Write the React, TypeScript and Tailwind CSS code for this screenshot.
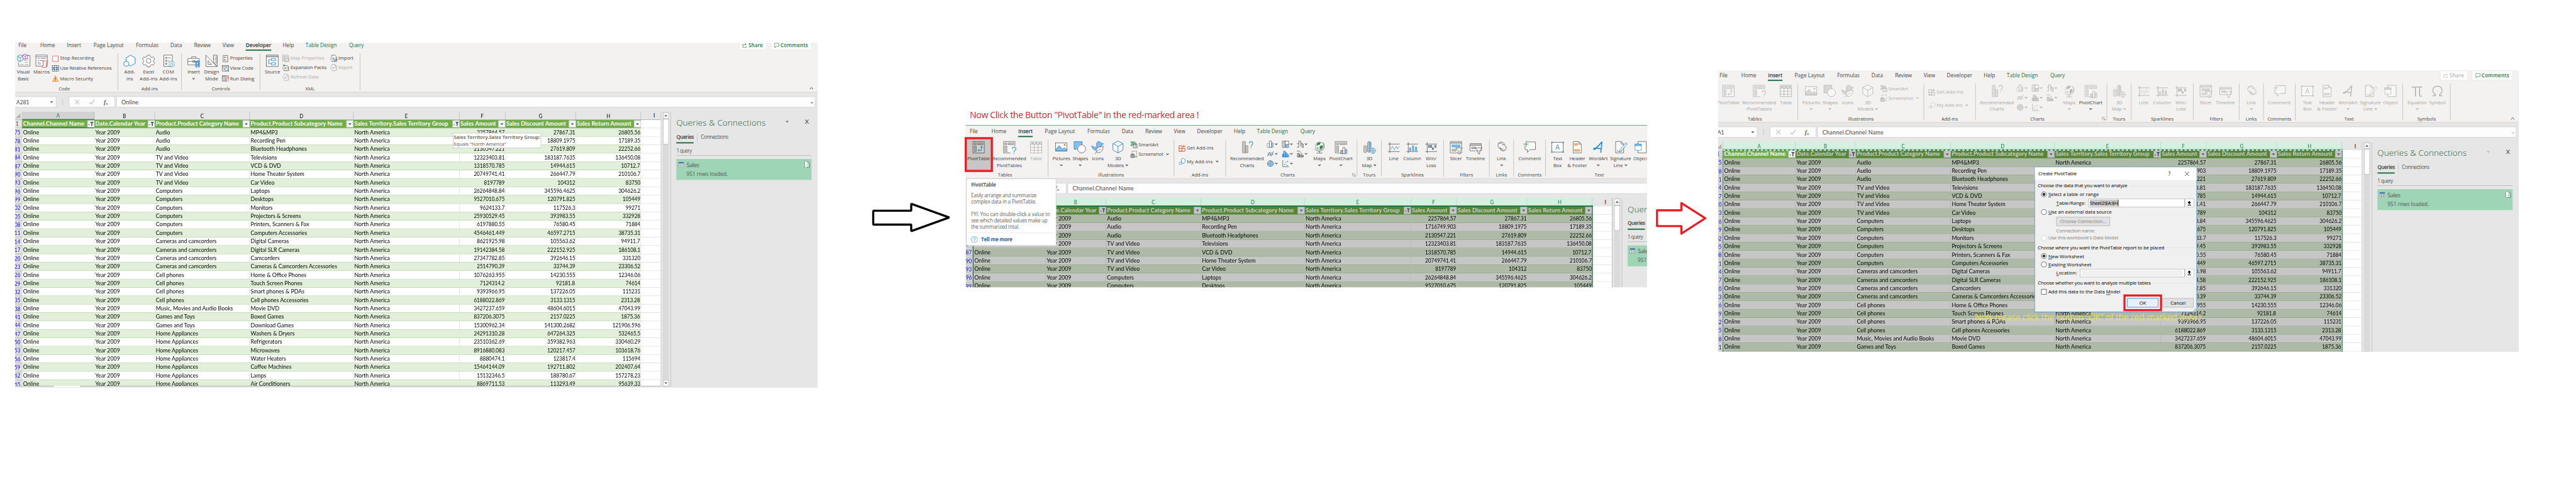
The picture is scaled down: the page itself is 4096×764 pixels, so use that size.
import React, { useLayoutEffect, useRef, useState, type ReactNode } from "react";

/* ---------- text fitted to a given width ---------- */
function Fit({ w, children, className = "" }: { w: number; children: string; className?: string }) {
  const ref = useRef<HTMLSpanElement>(null);
  const [ls, setLs] = useState(0);
  useLayoutEffect(() => {
    if (ref.current) setLs((w - ref.current.offsetWidth) / children.length);
  }, []);
  return (
    <span ref={ref} className={`inline-block shrink-0 self-start whitespace-nowrap ${className}`} style={{ letterSpacing: ls }}>
      {children}
    </span>
  );
}

/* ---------- icons ---------- */
const D = "#3b3a39";
const B = "#1e8bcd";
const LB = "#83beec";
const G = "#c8c6c4";

const big: Record<string, ReactNode> = {
  pivot: (
    <>
      <rect x="2.5" y=".5" width="27" height="27" fill="#fff" stroke={D} />
      <rect x="5.5" y="3.5" width="5" height="5" fill={G} stroke="#797774" />
      <rect x="13.5" y="3.5" width="13" height="5" fill={G} stroke="#797774" />
      <rect x="5.5" y="11.5" width="5" height="13" fill={G} stroke="#797774" />
      <path d="M15 21.5h8V12M20 15l3-3.5 3 3.5M18 18l-3.5 3.5L18 25" stroke={B} strokeWidth="1.4" />
    </>
  ),
  recpivot: (
    <>
      <path d="M19 27.500H2.500V.5h27V11" fill="#fff" stroke={D} />
      <rect x="5.5" y="3.5" width="5" height="5" fill={G} stroke="#797774" />
      <rect x="13.500" y="3.500" width="13" height="5" fill={G} stroke="#797774" />
      <rect x="5.5" y="11.5" width="5" height="13" fill={G} stroke="#797774" />
      <path d="M23 18c0-6 9-6 9-.5 0 4-5 4-5 8.500M27 28v2" stroke={B} strokeWidth="1.500" />
    </>
  ),
  table: (
    <>
      <rect x="2.500" y=".5" width="27" height="27" fill="#fff" stroke={D} />
      <rect x="3" y="1" width="26" height="6" fill={G} />
      <path d="M2.500 7.500h27M2.500 14.500h27M2.500 21.500h27M11.500 7.500v20M20.500 7.500v20" stroke={D} />
      <path d="M5 3h5l-2.500 3zM13.500 3h5L16 6zM22 3h5l-2.500 3z" fill={D} />
    </>
  ),
  pictures: (
    <>
      <rect x="2.500" y="3.500" width="27" height="20" fill="#fff" stroke={D} />
      <path d="M3 19l8-9 8 9 4-4 6 5v3H3z" fill={LB} stroke="#0f6cbd" />
      <circle cx="24" cy="8.500" r="2" fill="#e06c00" />
    </>
  ),
  shapes: (
    <>
      <rect x="1.500" y=".5" width="19" height="18" fill={LB} stroke="#0f6cbd" />
      <circle cx="19.500" cy="18" r="10.500" fill="#f3f2f1" />
      <circle cx="19.500" cy="18" r="9.500" fill="#fff" stroke={D} />
    </>
  ),
  icons: (
    <>
      <path d="M13 6c0-7 10-7 11-1h5c0 3-2 4-5 4 1 4-1 6-3 8l-9 4C4 20 2 16 2 10c3 4 7 5 12 3-1-2-1-4-1-7z" fill={LB} stroke="#0f6cbd" />
      <path d="M29 12c-7 0-17 3-17 10 0 3 2 5 5 5 8 0 11-7 12-15z" fill="#fff" stroke={D} />
      <path d="M9 30c4-6 8-9 14-12" stroke={D} />
    </>
  ),
  cube: (
    <path d="M16-.5l12 6v15l-12 7-12-7v-15zM4 5.500l5 2.500M28 5.500L16 12v5M16 12L9 8M16 17v10" fill="#fff" stroke="#0f7cd0" strokeWidth="1.300" />
  ),
  rechart: (
    <>
      <path d="M4.500.5h7v27h-7zM11.500 10.500h6v17h-6z" fill={G} stroke="#797774" />
      <path d="M21 5c0-6 8-6 8-.5 0 4-4 4-4 8.500M25 15v2" stroke={B} strokeWidth="1.500" />
    </>
  ),
  maps: (
    <>
      <path d="M23 2c7 5 6 20-7 21.500-6 0-10-3-10-6" stroke={D} />
      <circle cx="16" cy="11" r="9.500" fill="#fff" stroke="#797774" />
      <path d="M10 5c3-3 6-3 9-2l-2 5-5 1-3 3zM17 11l6-2 1 5-4 5-4-1zM9 14l4 1v4z" fill="#2a8a4a" />
      <path d="M16 23v5M9 28h14" stroke={D} />
    </>
  ),
  pchart: (
    <>
      <path d="M14 27.500H2.500V.5h27V9" fill="#fff" stroke={D} />
      <rect x="5.500" y="3.500" width="5" height="5" fill={G} stroke="#797774" />
      <rect x="13.500" y="3.500" width="13" height="5" fill={G} stroke="#797774" />
      <rect x="5.500" y="11.500" width="5" height="13" fill={G} stroke="#797774" />
      <path d="M15.500 21.500h5v8h-5zM25.500 19.500h5v10h-5z" fill={G} stroke={D} />
      <path d="M20.500 14.500h5v15h-5z" fill="#fff" stroke={D} />
      <path d="M26 20h4.500v9.500H26z" fill={LB} />
    </>
  ),
  map3d: (
    <>
      <path d="M2.500 11.500l3-2 4 2v14l-4 2-3-2zM11.500 2.500l4-2 4 2v22l-4 2-4-2z" fill={G} stroke="#797774" />
      <path d="M15.500 0l4 2.500v22h-4z" fill={LB} stroke={B} />
      <circle cx="24.500" cy="22.500" r="6.500" fill="#fff" stroke={B} />
      <path d="M18 22.500h13M24.500 16v13M24.500 16c-4 4-4 9 0 13M24.500 16c4 4 4 9 0 13" stroke={B} />
    </>
  ),
  line: (
    <>
      <path d="M2 6.500h28M2 24.500h28M6.500 2v26" stroke={D} />
      <path d="M8 20l5-8 4 8 5-8 3 6 4-6" stroke={B} />
    </>
  ),
  column: (
    <>
      <path d="M2 6.500h28M2 24.500h28M6.500 2v26" stroke={D} />
      <path d="M9.500 15.500h3v7h-3zM16.500 10.500h3v12h-3zM23.500 13.500h3v9h-3z" fill={LB} stroke={B} />
    </>
  ),
  winloss: (
    <>
      <path d="M2 6.500h28M2 24.500h28M6.500 2v26" stroke={D} />
      <path d="M9.500 9.500h3v5h-3zM14.500 9.500h3v5h-3zM18.500 15.500h3v4h-3zM24.500 9.500h3v5h-3z" fill={LB} stroke={D} />
    </>
  ),
  slicer: (
    <>
      <path d="M2.500.5h27v27h-27z" fill="#fff" stroke={D} />
      <path d="M3 1h26v3H3z" fill={G} />
      <path d="M2.500 4.500h27" stroke={D} />
      <path d="M6.500 8.500h19v5h-19z" fill={LB} stroke={B} />
      <path d="M6.500 18.500h10v5h-10z" fill={G} stroke="#797774" />
      <path d="M15.500 15.500h16l-6 7v8l-4-2v-6z" fill="#fff" stroke={D} />
    </>
  ),
  timeline: (
    <>
      <path d="M2.500 5.500h27v17h-27z" fill="#fff" stroke={D} />
      <path d="M3 6h26v3H3z" fill={G} />
      <path d="M2.500 9.500h27M6.500 13.500h4v4h-4zM12.500 13.500h3v4h-3z" stroke={D} />
      <path d="M15.500 15.500h16l-6 7v8l-4-2v-6z" fill="#fff" stroke={D} />
    </>
  ),
  link: (
    <path d="M18 17a8 8 0 1 1 5-8M12 14a7.500 7.500 0 1 0 6-6M13 17c2 4 6 5 10 3M19 8c-2-4-8-5-12-2" stroke="#605e5c" strokeWidth="1.200" />
  ),
  comment: (
    <>
      <path d="M9 1.500h20.500v18H17l-7 7v-7H4.500V10" fill="#fff" stroke={D} />
      <path d="M1 6.500h12M7.500-1v14" stroke="#2a9d4a" strokeWidth="1.400" />
    </>
  ),
  textbox: (
    <>
      <rect x="2.500" y="2.500" width="27" height="23" fill="#fff" stroke={D} />
      <path d="M11.500 20L16 7.500 20.500 20M13 16h6" stroke={B} strokeWidth="1.300" />
      <path d="M1 1h3v3H1zM28 1h3v3h-3zM1 24h3v3H1zM28 24h3v3h-3z" fill={B} />
    </>
  ),
  header: (
    <>
      <path d="M6.500.5h13l6 6v21h-19z" fill="#fff" stroke={D} />
      <path d="M19.500.5v6h6" stroke={D} />
      <path d="M9.500 5.500h7v4h-7zM9.500 19.500h12v4h-12z" fill="#f8c57a" stroke="#e06c00" />
    </>
  ),
  wordart: <path d="M25 1L22 27M25 1C19 8 13 15 8 19c-4 2-4-3 1-3l14 2" stroke={B} strokeWidth="2.400" />,
  signature: (
    <>
      <path d="M4.500.5h13l6 6v21h-19z" fill="#fff" stroke={D} />
      <path d="M17.500.5v6h6M7 22l4 2 9-.5" stroke={D} />
      <path d="M29 3l3 3-14 17-5 2 2-5z" fill="#fff" stroke={B} strokeWidth="1.300" />
    </>
  ),
  object: (
    <>
      <path d="M9.500.5h20v27h-20z" fill="#fff" stroke={D} />
      <path d="M2.500 6.500h15v15h-15z" fill="#fff" stroke={B} />
      <path d="M2.500 6.500h15v4h-15z" fill={LB} stroke={B} />
    </>
  ),
  equation: <path d="M4 4.500h24M11.500 5v22M21.500 5v18c0 3 2 4 5 3M4 7l1-3" stroke={D} strokeWidth="1.800" />,
  symbol: <path d="M4 25.500h7v-3C2 17 3 2.500 16 2.500S30 17 21 22.500v3h7" stroke={D} strokeWidth="1.500" />,
  vb: (
    <>
      <path d="M4.500 18v8.500h27V1.500h-9" fill="#fff" stroke={D} />
      <path d="M16 12.500h12M20 8.500h8M8 22.500h8M19 22.500h9M18 17.500h10" stroke="#797774" />
      <path d="M8-.5L14.500 3v9L8 16l-6-3V3zM2 3l6 4 6.500-4M8 7v9" fill="#fff" stroke={B} strokeWidth="1.300" />
      <path d="M20-2l5.500 2.500v7L20 10l-6-2.500v-7zM14 .5l6 3 5.500-3M20 3.500V10" fill="#fff" stroke="#b146c2" strokeWidth="1.300" />
    </>
  ),
  macros: (
    <>
      <rect x="2.500" y=".5" width="27" height="26" fill="#fff" stroke={D} />
      <path d="M2.500 4.500h27M7 8.500h5M14 8.500h12M7 13.500h3M12 13.500h8M7 17.500h5M7 21.500h8" stroke={D} />
      <path d="M20.500 14.500h10v4h-3v11H18c-2-2 0-4 2-4V14.500z" fill="#fff" stroke="#e8373a" strokeWidth="1.300" />
    </>
  ),
  addins: (
    <>
      <path d="M18 .5l11 6.500v13l-11 6.500-11-6.500V7z" fill="#fff" stroke="#0f7cd0" strokeWidth="1.300" />
      <path d="M8 14.500l6 3.500v6l-6 3.500L2 24v-6z" fill="#fff" stroke="#0f7cd0" strokeWidth="1.300" />
    </>
  ),
  gear: (
    <>
      <path d="M13 .5h6l1.500 4 3 1.500 4-1 3 5-3 3.500v2l3 3.500-3 5-4-1-3 1.500-1.500 4h-6l-1.500-4-3-1.500-4 1-3-5 3-3.500v-2l-3-3.500 3-5 4 1 3-1.500z" fill="#fff" stroke={D} />
      <circle cx="16" cy="14" r="5.500" stroke={D} />
    </>
  ),
  com: (
    <>
      <rect x="5.500" y=".5" width="20" height="27" fill="#fff" stroke={D} />
      <path d="M9.500 5.500h3v3h-3zM9.500 12.500h3v3h-3zM9.500 19.500h3v3h-3zM15 7h7M15 14h4" stroke={D} />
      <path d="M22.500 14.500h3l1 2.500 3-.5 1.500 3-2 2 2 2-1.500 3-3-.5-1 2.500h-3l-1-2.500-3 .5-1.500-3 2-2-2-2 1.500-3 3 .5z" fill="#fff" stroke={B} />
      <circle cx="24" cy="21.500" r="2.500" stroke={B} />
    </>
  ),
  toolbox: (
    <>
      <path d="M2.500 8.500h27v15h-27zM11.500 8v-3.500h10V8M2.500 15.500h27" fill="#fff" stroke={D} />
      <rect x="14.500" y="13.500" width="3" height="4" fill="#fff" stroke={D} />
      <path d="M19 14v3l2 2v10h3V19l2-2v-3h-2v3h-3v-3zM27 14h3v7h-3zM27 22h3v7h-3z" fill={LB} stroke="#0f6cbd" />
    </>
  ),
  design: (
    <>
      <path d="M2.500.5l26 27h-26zM7.500 13.500v9h9z" fill="#fff" stroke={D} />
      <path d="M20.500.5h9v27l-9-9zM25 5h4M23 9.500h6M25 14h4M23 18.500h6" stroke={D} />
    </>
  ),
  source: (
    <>
      <rect x="1.500" y=".5" width="28" height="27" fill="#fff" stroke={D} />
      <path d="M2 1h27v3H2z" fill={G} />
      <path d="M1.500 4.500h28" stroke={D} />
      <path d="M13.500 8.500h10v5h-10zM13.500 18.500h10v5h-10zM13 11H7.500v10H13M7.500 16H5" stroke={B} strokeWidth="1.300" />
    </>
  ),
};

const small: Record<string, ReactNode> = {
  stop: <rect x="1.500" y="1.500" width="13" height="13" fill="#fff" stroke="#e8373a" />,
  rel: (
    <>
      <rect x=".5" y="1.500" width="15" height="13" fill="#fff" stroke={D} />
      <path d="M1 6h4.500v5H1zM10.500 6H15v5h-4.500z" fill={LB} />
      <path d="M.5 6h15M.5 10.500h15M5.500 1.500v13M10.500 1.500v13" stroke="#0f4c81" />
    </>
  ),
  warn: (
    <>
      <path d="M8 1.500L15 15H1z" fill="#fcd28a" stroke="#e07a1a" />
      <path d="M8 6v5M8 12.500V14" stroke={D} strokeWidth="1.500" />
    </>
  ),
  props: <path d="M2.500.5h11v15h-11zM5.500 4h2v2h-2zM5.500 10h2v2h-2zM10 5h2M10 11h2" fill="#fff" stroke={D} />,
  code: (
    <>
      <path d="M.5 1.500h15v13H.5zM.5 4h15M3 7.500h3M3 10.500h3" fill="#fff" stroke={D} />
      <circle cx="10" cy="10" r="3.500" fill="#fff" stroke={B} strokeWidth="1.300" />
      <path d="M12.500 12.500l3 3" stroke={B} strokeWidth="1.300" />
    </>
  ),
  run: (
    <>
      <path d="M12 14.500H.5v-13H12M.5 4H12M3 7h2M6.500 7H11M3 9.500h2M6.500 9.500H11M3 12h2M6.500 12H11" stroke={D} />
      <path d="M14.500 1v10M14.500 13v2" stroke="#e8373a" strokeWidth="1.800" />
    </>
  ),
  xml: (
    <path d="M3.500 5V.5h7l4 4V15.500h-11V13M10.500.5v4h4M2 6L.5 9 2 12M12 6l1.500 3L12 12M5 9a2 2 0 1 0 4 0 2 2 0 1 0-4 0" fill="#fff" stroke={D} />
  ),
  expansion: (
    <>
      <path d="M3.500 5V3.500h7l4 3V15.500h-11V13M2 7L.5 9.500 2 12M12 7l1.500 2.500L12 12M5 9.500a2 2 0 1 0 4 0 2 2 0 1 0-4 0" fill="#fff" stroke={D} />
      <path d="M3.500 0v6M.5 3h6" stroke="#2a9d4a" strokeWidth="1.300" />
    </>
  ),
  map: <path d="M.5.5h13v15H.5zM.5 4h13M5 4v11M.5 8H9M.5 12H6M8.500 7.500h7v8h-7z" fill="#eee" stroke={D} />,
  import: (
    <>
      <path d="M3.500 5V.5h7l4 4V15.500h-11V13M2 6L.5 9 2 12M12 6l1.500 3L12 12M5 9a2 2 0 1 0 4 0 2 2 0 1 0-4 0" fill="#fff" stroke={D} />
      <path d="M16 9v4H9M11 10.500L8.500 13l2.500 2.500" stroke={B} strokeWidth="1.400" />
    </>
  ),
  smartart: (
    <>
      <path d="M0 1h9l5 4-1 2H7L4.500 10H0l3-4.500z" fill="#6bc08b" stroke="#2a9d4a" />
      <path d="M6.500 7.500h9v8h-9zM8.500 10h1M11 10h3M8.500 13h1M11 13h3" fill="#fff" stroke={D} />
    </>
  ),
  screenshot: (
    <>
      <path d="M3.500 6V.5h11V10" stroke={D} strokeDasharray="2 1.500" />
      <path d="M.5 8.500h9v7h-9zM3 8V7h4v1" fill={G} stroke={D} />
      <circle cx="5" cy="12" r="2" fill="#fff" stroke={D} />
      <path d="M13.500 11v5M11 13.500h5" stroke="#2a9d4a" />
    </>
  ),
  getadd: (
    <>
      <path d="M.5 2.500h7v13h-7M.5 2.500v13M.5 9h14v6.500H.5" stroke="#d83b01" strokeWidth="1.200" />
      <path d="M12 1v6M9 4h6" stroke="#d83b01" strokeWidth="1.200" />
    </>
  ),
  myadd: <path d="M10 .5l5 3v6l-5 3-4-2V3zM4 9.500l3 1.500v3l-3 1.500L1 14v-3z" fill="#fff" stroke="#0f7cd0" />,
  bar: (
    <>
      <path d="M.5 6.500h5v9h-5zM10.500 4.500h4v11h-4z" fill="#fff" stroke="#797774" />
      <path d="M5.500.5h5v15h-5z" fill="#fff" stroke={D} />
      <path d="M11 5h3.500v10.500H11z" fill={LB} />
    </>
  ),
  tree: (
    <>
      <path d="M.5.5h15v15H.5z" fill="#fff" stroke={D} />
      <path d="M1 1h6v14H1z" fill={G} />
      <path d="M8 9h7v6H8z" fill={LB} />
      <path d="M7.500 0v16M8 8.500h8" stroke={D} />
    </>
  ),
  water: <path d="M.5 6.500h4V15H.5M4.500 7V.5h5V13M9.500 5.500h3v10h3v-8h-3" stroke={D} />,
  linec: (
    <>
      <path d="M1 14l5-10 4 9 5-11" stroke={D} />
      <path d="M1 5l5 7 4-8 5 7" stroke={B} />
    </>
  ),
  hist: <path d="M.5 8.500h3v7h-3zM3.500 1.500h4v14h-4zM7.500 5.500h4v10h-4zM11.500 9.500h4v6h-4z" fill={LB} stroke="#0f6cbd" />,
  combo: (
    <>
      <path d="M1.500 6.500h4v9h-4zM6.500 9.500h4v6h-4zM11.500 11.500h4v4h-4z" fill={G} stroke={D} />
      <path d="M0 1h6l8 9" stroke={D} />
    </>
  ),
  pie: (
    <>
      <circle cx="8" cy="8" r="7" fill={LB} stroke="#0f6cbd" />
      <path d="M8 8H1a7 7 0 0 1 7-7z" fill={G} stroke="#797774" />
    </>
  ),
  scatter: (
    <>
      <path d="M1.500 0v15.500H16" stroke={D} />
      <path d="M5 9h2v2H5zM8 4h2v2H8zM11 11h2v2h-2zM12 2h2v2h-2z" fill={B} />
    </>
  ),
};

function Icon({ n, off }: { n: string; off?: boolean }) {
  return (
    <svg viewBox="0 0 32 32" fill="none" className={`h-[32px] w-[32px] shrink-0 overflow-visible ${off ? "opacity-45 grayscale" : ""}`}>
      {big[n]}
    </svg>
  );
}
function Mini({ n, off }: { n: string; off?: boolean }) {
  return (
    <svg viewBox="0 0 16 16" fill="none" className={`h-[16px] w-[16px] shrink-0 overflow-visible ${off ? "opacity-45 grayscale" : ""}`}>
      {small[n]}
    </svg>
  );
}
function Chev() {
  return (
    <svg viewBox="0 0 8 6" fill="none" className="inline-block h-[6px] w-[8px] shrink-0">
      <path d="M1.200 1.200L4 4l2.800-2.800" stroke="currentColor" strokeWidth="1.500" />
    </svg>
  );
}
function Tri({ className = "" }: { className?: string }) {
  return (
    <svg viewBox="0 0 8 5" className={`h-[5px] w-[8px] shrink-0 ${className}`}>
      <path d="M0 0h8L4 5z" fill="currentColor" />
    </svg>
  );
}

/* ---------- ribbon parts ---------- */
function Big({ n, a, b, aw, bw, drop, off, on, className }: { n: string; a: string; b?: string; aw: number; bw?: number; drop?: boolean; off?: boolean; on?: boolean; className: string }) {
  return (
    <div className={`flex shrink-0 flex-col items-center whitespace-nowrap ${off && !on ? "text-[#a9a7a5]" : "text-[#444]"} ${className}`}>
      <div className="h-[33px]"><Icon n={n} off={off} /></div>
      <div className="flex"><Fit w={aw}>{a}</Fit></div>
      {(b || drop) && (
        <div className="flex h-[16px] items-center gap-[3px]">
          {b && <Fit w={bw ?? 40}>{b}</Fit>}
          {drop && <Chev />}
        </div>
      )}
    </div>
  );
}
function Small({ n, t, w, drop, off, className = "" }: { n: string; t: string; w: number; drop?: boolean; off?: boolean; className?: string }) {
  return (
    <div className={`flex items-center gap-[3px] whitespace-nowrap ${off ? "text-[#b1afad]" : "text-[#444]"} ${className}`}>
      <Mini n={n} off={off} />
      <Fit w={w}>{t}</Fit>
      {drop && <span className="ml-[3px] flex"><Chev /></span>}
    </div>
  );
}
function Group({ cap, className, children, shift = "", launcher }: { cap: string; className: string; children: ReactNode; shift?: string; launcher?: boolean }) {
  return (
    <div className={`relative flex h-[88px] shrink-0 flex-col border-r border-[#b3b0ad] ${className}`}>
      <div className="flex h-[76px] shrink-0 pt-[4px] leading-[16px]">{children}</div>
      <div className={`text-center text-[11.200px] leading-[16px] text-[#444] ${shift}`}>{cap}</div>
      {launcher && (
        <svg viewBox="0 0 8 8" fill="none" className="absolute right-[3px] bottom-0 h-[8px] w-[8px]">
          <path d="M.5 7V.5H7M3 3l4 4M7.500 3v4.500H3" stroke="#666" />
        </svg>
      )}
    </div>
  );
}
function ChartCell({ n, off }: { n: string; off?: boolean }) {
  return (
    <div className={`flex h-[23px] w-[35.500px] items-center gap-[2px] pl-[2px] ${off ? "text-[#a9a7a5]" : "text-[#444]"}`}>
      <Mini n={n} off={off} />
      <Chev />
    </div>
  );
}

function InsertRibbon({ off }: { off?: boolean }) {
  return (
    <>
      <Group cap="Tables" className="w-[197px]" shift="pr-[8px]">
        <Big n="pivot" a="PivotTable" aw={54} off={off} className="w-[62px]" />
        <Big n="recpivot" a="Recommended" aw={80} b="PivotTables" bw={60} off={off} className="w-[84px]" />
        <Big n="table" a="Table" aw={28} off className="w-[44px]" />
      </Group>
      <Group cap="Illustrations" className="w-[300px]">
        <Big n="pictures" a="Pictures" aw={42} drop off={off} className="ml-[8px] w-[46px]" />
        <Big n="shapes" a="Shapes" aw={37} drop off={off} className="w-[44px]" />
        <Big n="icons" a="Icons" aw={28} off={off} className="w-[40px]" />
        <Big n="cube" a="3D" aw={14} b="Models" bw={39} drop off={off} className="w-[56px]" />
        <div className="flex flex-col pl-[2px]">
          <Small n="smartart" t="SmartArt" w={47} off={off} className="h-[16px]" />
          <Small n="screenshot" t="Screenshot" w={59} drop off={off} className="mt-[7px] h-[16px]" />
        </div>
      </Group>
      <Group cap="Add-ins" className="w-[123px]">
        <div className="flex flex-col pl-[11px]">
          <Small n="getadd" t="Get Add-ins" w={63} off={off} className="mt-[8px] h-[16px]" />
          <Small n="myadd" t="My Add-ins" w={62} drop off={off} className="mt-[16px] h-[16px]" />
        </div>
      </Group>
      <Group cap="Charts" className="w-[313px]" shift="pr-[18px]" launcher>
        <Big n="rechart" a="Recommended" aw={80} b="Charts" bw={34} off={off} className="ml-[8px] w-[85px]" />
        <div className="ml-[3px] flex w-[106px] shrink-0 flex-wrap content-start">
          <div className="-mt-[5px] flex flex-col">
            <div className="flex">
              <ChartCell n="bar" off={off} />
              <ChartCell n="tree" off={off} />
              <ChartCell n="water" off={off} />
            </div>
            <div className="flex">
              <ChartCell n="linec" off={off} />
              <ChartCell n="hist" off={off} />
              <ChartCell n="combo" off={off} />
            </div>
            <div className="flex">
              <ChartCell n="pie" off={off} />
              <ChartCell n="scatter" off={off} />
            </div>
          </div>
        </div>
        <Big n="maps" a="Maps" aw={29} drop off={off} className="w-[42px]" />
        <Big n="pchart" a="PivotChart" aw={56} drop off={off} on className="w-[60px]" />
      </Group>
      <Group cap="Tours" className="w-[58px]">
        <Big n="map3d" a="3D" aw={14} b="Map" bw={24} drop off={off} className="w-[57px]" />
      </Group>
      <Group cap="Sparklines" className="w-[148px]">
        <Big n="line" a="Line" aw={23} off={off} className="ml-[8px] w-[42px]" />
        <Big n="column" a="Column" aw={43} off={off} className="w-[46px]" />
        <Big n="winloss" a="Win/" aw={26} b="Loss" bw={23} off={off} className="w-[44px]" />
      </Group>
      <Group cap="Filters" className="w-[109px]">
        <Big n="slicer" a="Slicer" aw={29} off={off} className="ml-[7px] w-[44px]" />
        <Big n="timeline" a="Timeline" aw={46} off={off} className="w-[49px]" />
      </Group>
      <Group cap="Links" className="w-[58px]">
        <Big n="link" a="Link" aw={22} drop off={off} className="w-[57px]" />
      </Group>
      <Group cap="Comments" className="w-[76px]">
        <Big n="comment" a="Comment" aw={54} off={off} className="w-[75px]" />
      </Group>
      <Group cap="Text" className="w-[256px]">
        <Big n="textbox" a="Text" aw={21} b="Box" bw={19} off={off} className="ml-[4px] w-[48px]" />
        <Big n="header" a="Header" aw={38} b="& Footer" bw={47} off={off} className="w-[46px]" />
        <Big n="wordart" a="WordArt" aw={45} drop off={off} className="w-[54px]" />
        <Big n="signature" a="Signature" aw={50} b="Line" bw={22} drop off={off} className="w-[52px]" />
        <Big n="object" a="Object" aw={35} off={off} className="w-[44px]" />
      </Group>
      <Group cap="Symbols" className="w-[113px]">
        <Big n="equation" a="Equation" aw={46} drop off={off} className="ml-[9px] w-[49px]" />
        <Big n="symbol" a="Symbol" aw={40} off={off} className="w-[47px]" />
      </Group>
    </>
  );
}

function DeveloperRibbon() {
  return (
    <>
      <Group cap="Code" className="w-[247px]" shift="pr-[8px]">
        <Big n="vb" a="Visual" aw={31} b="Basic" bw={27} className="w-[43px]" />
        <Big n="macros" a="Macros" aw={39} className="w-[44px]" />
        <div className="flex flex-col pl-[3px]">
          <Small n="stop" t="Stop Recording" w={81} className="h-[17px]" />
          <Small n="rel" t="Use Relative References" w={123} className="mt-[7px] h-[16px]" />
          <Small n="warn" t="Macro Security" w={79} className="mt-[8px] h-[16px]" />
        </div>
      </Group>
      <Group cap="Add-ins" className="w-[152px]">
        <Big n="addins" a="Add-" aw={26} b="ins" bw={15} className="ml-[6px] w-[44px]" />
        <Big n="gear" a="Excel" aw={26} b="Add-ins" bw={42} className="w-[46px]" />
        <Big n="com" a="COM" aw={28} b="Add-ins" bw={42} className="w-[48px]" />
      </Group>
      <Group cap="Controls" className="w-[187px]">
        <Big n="toolbox" a="Insert" aw={29} drop className="ml-[7px] w-[42px]" />
        <Big n="design" a="Design" aw={35} b="Mode" bw={31} className="w-[44px]" />
        <div className="flex flex-col pl-[3px]">
          <Small n="props" t="Properties" w={54} className="h-[17px]" />
          <Small n="code" t="View Code" w={56} className="mt-[7px] h-[16px]" />
          <Small n="run" t="Run Dialog" w={58} className="mt-[8px] h-[16px]" />
        </div>
      </Group>
      <Group cap="XML" className="w-[238px]">
        <Big n="source" a="Source" aw={37} className="ml-[6px] w-[46px]" />
        <div className="flex w-[115px] flex-col pl-[1px]">
          <Small n="map" t="Map Properties" w={80} off className="h-[15px]" />
          <Small n="expansion" t="Expansion Packs" w={86} className="mt-[7px] h-[16px]" />
          <Small n="xml" t="Refresh Data" w={66} off className="mt-[7px] h-[16px]" />
        </div>
        <div className="flex flex-col">
          <Small n="import" t="Import" w={36} className="h-[15px]" />
          <Small n="xml" t="Export" w={33} off className="mt-[7px] h-[16px]" />
        </div>
      </Group>
    </>
  );
}

/* ---------- worksheet ---------- */
const rows: [string, string, string, string, string][] = [
  ["Audio", "MP4&MP3", "2257864.57", "27867.31", "26805.56"],
  ["Audio", "Recording Pen", "1716749.903", "18809.1975", "17189.35"],
  ["Audio", "Bluetooth Headphones", "2130547.221", "27619.809", "22252.66"],
  ["TV and Video", "Televisions", "12323403.81", "183187.7635", "136450.08"],
  ["TV and Video", "VCD & DVD", "1318570.785", "14944.615", "10712.7"],
  ["TV and Video", "Home Theater System", "20749741.41", "266447.79", "210106.7"],
  ["TV and Video", "Car Video", "8197789", "104312", "83750"],
  ["Computers", "Laptops", "26264848.84", "345596.4625", "304626.2"],
  ["Computers", "Desktops", "9527010.675", "120791.825", "105449"],
  ["Computers", "Monitors", "9624133.7", "117526.3", "99271"],
  ["Computers", "Projectors & Screens", "25930529.45", "393983.55", "332928"],
  ["Computers", "Printers, Scanners & Fax", "6197880.55", "76580.45", "71884"],
  ["Computers", "Computers Accessories", "4546461.449", "46597.2715", "38735.31"],
  ["Cameras and camcorders", "Digital Cameras", "8621925.98", "105563.62", "94911.7"],
  ["Cameras and camcorders", "Digital SLR Cameras", "19142384.58", "222152.925", "186108.1"],
  ["Cameras and camcorders", "Camcorders", "27347782.85", "392646.15", "331320"],
  ["Cameras and camcorders", "Cameras & Camcorders Accessories", "2514790.39", "33744.39", "23306.52"],
  ["Cell phones", "Home & Office Phones", "1076263.955", "14230.555", "12346.06"],
  ["Cell phones", "Touch Screen Phones", "7124314.2", "92181.8", "74614"],
  ["Cell phones", "Smart phones & PDAs", "9393966.95", "137226.05", "115231"],
  ["Cell phones", "Cell phones Accessories", "6188022.869", "3133.1315", "2313.28"],
  ["Music, Movies and Audio Books", "Movie DVD", "3427237.659", "48604.6015", "47043.99"],
  ["Games and Toys", "Boxed Games", "837206.3075", "2157.0225", "1875.36"],
  ["Games and Toys", "Download Games", "15300962.34", "141300.2682", "121906.596"],
  ["Home Appliances", "Washers & Dryers", "24291310.28", "647264.325", "532465.5"],
  ["Home Appliances", "Refrigerators", "23510362.69", "359382.963", "330460.29"],
  ["Home Appliances", "Microwaves", "8916880.083", "120217.457", "103618.76"],
  ["Home Appliances", "Water Heaters", "8880474.1", "123817.4", "115694"],
  ["Home Appliances", "Coffee Machines", "15464144.09", "192711.802", "202407.64"],
  ["Home Appliances", "Lamps", "15132346.5", "188780.67", "157278.23"],
  ["Home Appliances", "Air Conditioners", "8869711.53", "113293.49", "95639.33"],
];
const colW = ["w-[172px]", "w-[144px]", "w-[226px]", "w-[247px]", "w-[253px]", "w-[109px]", "w-[168px]", "w-[155px]"];
const heads: [string, boolean, number][] = [
  ["Channel.Channel Name", true, 146],
  ["Date.Calendar Year", true, 119],
  ["Product.Product Category Name", false, 198],
  ["Product.Product Subcategory Name", false, 219],
  ["Sales Territory.Sales Territory Group", true, 224],
  ["Sales Amount", false, 85],
  ["Sales Discount Amount", false, 142],
  ["Sales Return Amount", false, 130],
];

function FilterBtn({ active, dim }: { active: boolean; dim: boolean }) {
  return (
    <span className={`flex h-[17px] w-[17px] shrink-0 items-center justify-center border ${dim ? "border-[#a8a8b0] bg-[#c3c5c8]" : "border-[#b5b8bd] bg-[#f5f6f8]"}`}>
      <svg viewBox="0 0 15 15" className="h-[15px] w-[15px]">
        {active ? <path d="M5.500 2.500h8.500L11 6.500v6H8.500v-6zM1.500 8.500h4L3.500 11z" fill="#555" /> : <path d="M4 6h7l-3.500 4.500z" fill="#555" />}
      </svg>
    </span>
  );
}

function Sheet({ mode, count }: { mode: "plain" | "sel" | "ants"; count: number }) {
  const sel = mode !== "plain";
  return (
    <div className="relative flex w-[1541px] shrink-0 flex-col overflow-hidden border-r border-[#999] font-['Lato',sans-serif] text-[13.600px] leading-[19px] text-black">
      <div className={`flex h-[20px] shrink-0 bg-[#e6e6e6] text-[13px] ${sel ? "" : "border-b border-[#999]"}`}>
        <div className="flex w-[19px] items-end justify-end border-r border-[#b5b5b5] pr-[3px] pb-[3px]">
          <svg viewBox="0 0 12 12" className="h-[12px] w-[12px]"><path d="M12 0v12H0z" fill="#b4b4b4" /></svg>
        </div>
        {colW.map((w, i) => (
          <div
            key={i}
            className={`flex h-[20px] shrink-0 items-center justify-center border-r ${w} ${
              sel ? "border-[#b0c8bb] bg-[#d3f0e0] text-[#217346]" : i === 0 ? "border-b-2 border-[#ababab] border-b-[#217346] bg-[#d2d2d2] text-[#217346]" : "border-[#b5b5b5]"
            }`}
          >
            <span className="inline-block scale-x-[0.9]">{"ABCDEFGH"[i]}</span>
          </div>
        ))}
        <div className="flex grow items-center justify-end pr-[14px]"><span>I</span></div>
      </div>
      {/* header row */}
      <div className="flex h-[20px] shrink-0">
        <div className={`flex h-[20px] w-[19px] flex-col border-r border-[#999] pb-[1px] ${sel ? "bg-[#d5d5d5]" : "bg-[#e6e6e6]"}`}>
          <div className={`flex h-[18px] items-center border-b border-[#b0b0b0] pl-[3px] ${sel ? "text-[#1f6fbf]" : "text-[#7d3b00]"}`}><span className="scale-x-[0.89]">1</span></div>
        </div>
        {heads.map(([h, act, w], i) => {
          const bright = !sel || (mode === "ants" && i === 0);
          return (
            <div key={h} className={`flex shrink-0 items-center justify-between pl-[2px] font-bold whitespace-nowrap ${colW[i]} ${bright ? "bg-[#70ad47] text-white" : "bg-[#568535] text-[#cfcfcf]"} ${sel ? "border-b border-[#82a16d]" : i === 0 ? "border-b-2 border-[#217346]" : "border-b border-[#a9d08e]"}`}>
              <Fit w={w}>{h}</Fit>
              <FilterBtn active={act} dim={!bright} />
            </div>
          );
        })}
        <div className="grow border-b border-[#d4d4d4] bg-white" />
      </div>
      {rows.slice(0, count).map((r, ri) => {
        const green = ri % 2 === 0;
        const cell = sel
          ? green
            ? "bg-[#aebaa8] border-r-[#aebaa8] border-b-[#82a16d]"
            : "bg-[#c6c6c6] border-r-[#a8a8a8] border-b-[#82a16d]"
          : green
            ? "bg-[#e2efda] border-r-[#e2efda] border-b-[#a9d08e]"
            : "bg-white border-r-[#d4d4d4] border-b-[#a9d08e]";
        const vals = ["Online", "Year 2009", r[0], r[1], "North America", r[2], r[3], r[4]];
        return (
          <div key={ri} className="flex h-[20px] shrink-0">
            <div className="flex h-[20px] w-[19px] shrink-0 flex-col justify-center border-r border-[#999] bg-[#f0f0f0] py-[1px]">
              <div className={`flex h-[18px] items-center justify-end overflow-hidden border-y border-[#ababab] pr-[3px] text-[#0000ff] ${sel ? "bg-[#d5d5d5]" : "bg-[#e6e6e6]"}`}>
                <span className="inline-block origin-right scale-x-[0.89]">{475 + ri * 3}</span>
              </div>
            </div>
            {vals.map((v, i) => (
              <div key={i} className={`flex shrink-0 items-center border-r border-b whitespace-nowrap ${colW[i]} ${cell} ${i > 4 ? "justify-end pr-[1px]" : "pl-[2px]"} ${i === 7 ? "border-r-[#a9d08e]" : ""}`}>
                <span className={`inline-block ${i > 4 ? "origin-right scale-x-[0.895]" : "origin-left scale-x-[0.97]"}`}>{v}</span>
              </div>
            ))}
            <div className="grow border-b border-[#d4d4d4] bg-white" />
          </div>
        );
      })}
      {sel && (
        <div className="pointer-events-none absolute top-[18px] bottom-0 left-[17px] w-[1477px] border-x-2 border-t-[3px] border-[#217346]">
          {mode === "ants" && (
            <div className="absolute -inset-x-px -top-[2px] bottom-0 border-x border-t-2 border-dashed border-white" />
          )}
        </div>
      )}
    </div>
  );
}

/* ---------- workbook window ---------- */
const tabList: [string, string, number][] = [
  ["File", "w-[51.700px]", 19],
  ["Home", "w-[63.700px]", 35],
  ["Insert", "w-[63.300px]", 34],
  ["Page Layout", "w-[101.300px]", 72],
  ["Formulas", "w-[82px]", 53],
  ["Data", "w-[56px]", 27],
  ["Review", "w-[68px]", 40],
  ["View", "w-[55.300px]", 27],
  ["Developer", "w-[88px]", 61],
  ["Help", "w-[54.500px]", 27],
  ["Table Design", "w-[103.700px]", 75],
  ["Query", "w-[60px]", 35],
];

function Workbook({ active, mode, cell, formula, count, children }: { active: string; mode: "plain" | "sel" | "ants"; cell: string; formula: string; count: number; children?: ReactNode }) {
  const off = mode === "ants";
  return (
    <div className="relative flex h-[831px] w-[1913px] shrink-0 flex-col bg-[#e6e6e6] font-['Open_Sans',sans-serif] text-[11.500px]">
      <div className={`h-[128px] shrink-0 border-b border-[#cfcdcb] bg-[#f3f2f1] ${mode === "sel" ? "border-t border-t-[#217346] pt-[5px]" : "pt-[6px]"}`}>
        <div className="flex h-[23px] items-stretch pl-[10px] text-[12.500px] text-[#444]">
          {tabList.map(([t, w, tw]) => (
            <div key={t} className={`flex shrink-0 ${w} ${t === active ? "font-semibold text-[#333]" : t === "Table Design" || t === "Query" ? "text-[#217346]" : ""}`}>
              <div className={`flex h-[23px] items-center leading-[20px] ${t === active ? "border-b-[3px] border-[#217346]" : ""}`}><Fit w={tw}>{t}</Fit></div>
            </div>
          ))}
          <div className="flex grow items-start justify-end gap-[10px] pr-[13px] text-[12px] leading-[22px] font-semibold">
            <div className={`-mt-[2px] flex h-[24px] w-[66px] items-center gap-[3px] rounded-[2px] border border-[#e1dfdd] bg-white pl-[7px] ${off ? "text-[#b5b3b1]" : "text-[#217346]"}`}>
              <svg viewBox="0 0 12 12" fill="none" className="h-[12px] w-[12px]"><path d="M4 4H1v7.500h8.500V8M3.500 8c0-3 2-4.500 5-4.500M6.500 1L9.500 3.500 6.500 6" stroke="currentColor" /></svg>
              <Fit w={34}>Share</Fit>
            </div>
            <div className="-mt-[2px] flex h-[24px] w-[98px] items-center gap-[3px] rounded-[2px] border border-[#e1dfdd] bg-white pl-[7px] text-[#217346]">
              <svg viewBox="0 0 12 12" fill="none" className="h-[12px] w-[12px]"><path d="M.5 1.500h11v7H5l-3 3v-3H.5z" stroke="currentColor" /></svg>
              <Fit w={66}>Comments</Fit>
            </div>
          </div>
        </div>
        <div className="mt-[6px] flex">
          {active === "Developer" ? <DeveloperRibbon /> : <InsertRibbon off={off} />}
          <div className="flex h-[88px] grow items-end justify-end pr-[9px] pb-[1px]">
            <svg viewBox="0 0 10 7" fill="none" className="h-[7px] w-[10px]"><path d="M1 6l4-4.500L9 6" stroke="#444" strokeWidth="1.400" /></svg>
          </div>
        </div>
      </div>
      {/* formula bar */}
      <div className="mt-[10px] flex h-[26px] shrink-0 items-stretch pr-[5px] font-['Lato',sans-serif] text-[13.600px] leading-[24px] text-[#444]">
        <div className="flex w-[100px] items-center justify-between border border-l-0 border-[#c6c6c6] bg-[#fdfdfd] pr-[6px] pl-[5px]">
          <span className="inline-block origin-left scale-x-[0.93]">{cell}</span>
          <Tri className="text-[#777]" />
        </div>
        <div className="flex w-[30px] flex-col items-center justify-center gap-[3px]">
          <i className="h-[2px] w-[2px] bg-[#aaa]" /><i className="h-[2px] w-[2px] bg-[#aaa]" /><i className="h-[2px] w-[2px] bg-[#aaa]" />
        </div>
        <div className="flex w-[110px] items-center gap-[21px] border border-[#c6c6c6] bg-[#fdfdfd] pl-[12px]">
          <svg viewBox="0 0 14 14" fill="none" className="h-[14px] w-[14px]"><path d="M2 2l10 10M12 2L2 12" stroke="#c0c0c0" strokeWidth="1.700" /></svg>
          <svg viewBox="0 0 14 14" fill="none" className="h-[14px] w-[14px]"><path d="M1 8l4 4 8-10" stroke="#c0c0c0" strokeWidth="2" /></svg>
          <span className="font-['Liberation_Serif',serif] text-[15px] leading-none font-bold text-[#666] italic">f<sub className="text-[10px]">x</sub></span>
        </div>
        <div className="ml-[3px] flex grow items-center justify-between border border-[#c6c6c6] bg-[#fdfdfd] pr-[3px] pl-[11px]">
          <Fit w={formula === "Online" ? 41 : 146}>{formula}</Fit>
          <span className={off ? "text-[#bbb]" : "text-[#777]"}><Chev /></span>
        </div>
      </div>
      <div className="mt-[10px] flex min-h-0 grow">
        <div className="flex w-[1541px] shrink-0 flex-col">
          <div className="flex min-h-0 grow overflow-hidden"><Sheet mode={mode} count={count} /></div>
          <div className="flex h-[3px] shrink-0">
            <div className="w-[94px] border-t border-r border-[#999] bg-[#e6e6e6]" />
            <div className="w-[64px] bg-white" />
            <div className="grow border-t border-l border-[#999] bg-[#e6e6e6]" />
          </div>
        </div>
        {/* scrollbar */}
        <div className="ml-[4px] flex w-[14px] shrink-0 flex-col bg-[#dadada] pt-[2px] pb-[2px]">
          <div className="flex h-[15px] items-center justify-center border border-[#ababab] bg-white"><Tri className="rotate-180 text-[#666]" /></div>
          <div className="mt-px h-[60px] border border-[#ababab] bg-white" />
          <div className="grow" />
          <div className="flex h-[15px] items-center justify-center border border-[#ababab] bg-white"><Tri className="text-[#666]" /></div>
        </div>
        {/* side pane */}
        <div className="mt-[2px] ml-[4px] flex grow flex-col border-l border-[#b5b5b5] pr-[14px] pl-[13px] text-[12.500px] text-[#555]">
          <div className="flex h-[50px] items-center">
            <div className="flex items-center"><Fit w={213} className="text-[20px] font-light text-[#185c37]">Queries &amp; Connections</Fit></div>
            <div className={`ml-auto flex pr-[38px] pb-[6px] ${off ? "text-[#bbb]" : "text-[#777]"}`}><Tri /></div>
            <svg viewBox="0 0 10 10" fill="none" className="mr-[6px] mb-[6px] h-[10px] w-[10px]"><path d="M1 0l8 10M9 0L1 10" stroke="#555" strokeWidth="1.600" /></svg>
          </div>
          <div className="flex h-[24px] items-start">
            <div className="flex h-[24px] items-center border-b-[3px] border-[#217346] font-semibold text-[#444]"><Fit w={41}>Queries</Fit></div>
            <div className="mx-[8px] h-[18px] w-px bg-[#bbb]" />
            <div className="flex h-[20px] items-center"><Fit w={66}>Connections</Fit></div>
          </div>
          <div className="mt-[4px] flex h-[25px] items-end border-b border-[#ababab] pb-[1px] text-[12px] leading-[18px]"><Fit w={36} className="mt-auto">1 query</Fit></div>
          <div className="mt-[8px] flex h-[50px] items-start bg-[#9fd5b7] pt-[5px] pr-[3px] pl-[5px]">
            <svg viewBox="0 0 13 13" className="mt-[2px] h-[13px] w-[13px]">
              <rect width="13" height="13" fill="#777" />
              <rect width="13" height="3.500" fill="#3b7ac2" />
              <path d="M1 4h3v2H1zM5 4h3v2H5zM9 4h3v2H9zM1 7h3v2H1zM5 7h3v2H5zM9 7h3v2H9zM1 10h3v2H1zM5 10h3v2H5zM9 10h3v2H9z" fill="#fff" />
            </svg>
            <div className="ml-[6px] flex flex-col">
              <Fit w={31} className="text-[14px] leading-[18px]">Sales</Fit>
              <Fit w={98} className="mt-[4px] leading-[18px]">951 rows loaded.</Fit>
            </div>
            <svg viewBox="0 0 15 16" fill="none" className="ml-auto h-[16px] w-[15px]">
              <path d="M1.500.5h7l4 4v11h-11z" fill="#fff" stroke="#666" />
              <path d="M8.500.5v4h4" stroke="#666" />
              <path d="M7 11a3.500 3.500 0 0 1 6-1.500V8M14 12a3.500 3.500 0 0 1-6 1.500V15" stroke="#3a9d68" strokeWidth="1.400" />
            </svg>
          </div>
        </div>
      </div>
      {children}
    </div>
  );
}

/* ---------- dialog ---------- */
function Radio({ on, off }: { on?: boolean; off?: boolean }) {
  return (
    <span className={`mr-[4px] ml-[15px] flex h-[13px] w-[13px] shrink-0 items-center justify-center rounded-full border bg-white ${off ? "border-[#c4c4c4]" : "border-[#333]"}`}>
      {on && <i className="h-[7px] w-[7px] rounded-full bg-[#333]" />}
    </span>
  );
}
function Section({ t, w }: { t: string; w: number }) {
  return (
    <div className="flex h-[20px] items-center pr-[6px] pl-[7px] leading-[20px]">
      <Fit w={w}>{t}</Fit>
      <div className="ml-[5px] h-px grow bg-[#dcdcdc]" />
    </div>
  );
}
function PickBtn() {
  return (
    <span className="flex h-full w-[22px] items-center justify-center border-l-2 border-[#ababab] bg-[#fdfdfd]">
      <svg viewBox="0 0 10 11" className="h-[11px] w-[10px]"><path d="M5 0l4.500 4.500h-3V8h-3V4.500h-3zM1 9.500h8V11H1z" fill="#000" /></svg>
    </span>
  );
}
function U({ k, t }: { k: string; t: string }) {
  return <span className="whitespace-nowrap"><span className="underline underline-offset-2">{k}</span>{t}</span>;
}
function Dialog() {
  return (
    <div className="absolute top-[234px] left-[760px] flex h-[346px] w-[387px] flex-col border border-[#1883d7] bg-[#f0f0f0] text-[11.600px] leading-[16px] text-black">
      <div className="flex h-[30px] shrink-0 items-center bg-white pr-[17px] pl-[8px] leading-[30px]">
        <Fit w={92}>Create PivotTable</Fit>
        <span className="mr-[34px] ml-auto text-[13px]">?</span>
        <svg viewBox="0 0 12 12" fill="none" className="h-[11px] w-[11px]"><path d="M.5.5l11 11M11.500.5l-11 11" stroke="#000" strokeWidth="1.100" /></svg>
      </div>
      <div className="h-[4px]" />
      <Section t="Choose the data that you want to analyze" w={214} />
      <div className="flex h-[20px] items-center"><Radio on /><U k="S" t="elect a table or range" /></div>
      <div className="flex h-[22px] items-center pr-[6px] pl-[51px]">
        <div className="w-[76px]"><U k="T" t="able/Range:" /></div>
        <div className="flex h-[20px] grow items-center border border-[#ababab] bg-white pl-[3px]">
          <span className="flex border-r border-black bg-[#c8c8c8]"><Fit w={67}>Sheet2!$A:$H</Fit></span>
          <span className="ml-auto h-full"><PickBtn /></span>
        </div>
      </div>
      <div className="flex h-[20px] items-center"><Radio /><U k="U" t="se an external data source" /></div>
      <div className="mt-[2px] ml-[51px] flex h-[22px] w-[128px] items-center justify-center border border-[#b0b0b0] bg-[#e1e1e1] leading-[20px] text-[#838383]"><Fit w={110}>Choose Connection...</Fit></div>
      <div className="mt-[2px] flex h-[18px] items-center pl-[51px] leading-[18px] text-[#838383]"><Fit w={93}>Connection name:</Fit></div>
      <div className="flex h-[16px] items-center text-[#838383]"><Radio off /><Fit w={167}>Use this workbook's Data Model</Fit></div>
      <div className="h-[5px]" />
      <Section t="Choose where you want the PivotTable report to be placed" w={301} />
      <div className="flex h-[21px] items-center"><Radio on /><U k="N" t="ew Worksheet" /></div>
      <div className="flex h-[19px] items-center"><Radio /><U k="E" t="xisting Worksheet" /></div>
      <div className="flex h-[21px] items-center pr-[6px] pl-[51px]">
        <div className="w-[56px]"><U k="L" t="ocation:" /></div>
        <div className="flex h-[20px] grow items-center border border-[#ababab] bg-white pl-[3px]">
          <span className="mr-[5px] h-[14px] grow bg-[#f0f0f0]" />
          <PickBtn />
        </div>
      </div>
      <div className="h-[4px]" />
      <Section t="Choose whether you want to analyze multiple tables" w={269} />
      <div className="flex h-[21px] items-center">
        <span className="mr-[4px] ml-[15px] h-[13px] w-[13px] border border-[#333] bg-white" />
        <span className="whitespace-nowrap">Add this data to the Data <span className="underline underline-offset-2">M</span>odel</span>
      </div>
      <div className="mt-[5px] flex h-[22px] justify-end gap-[10px] pr-[7px]">
        <div className="flex w-[74px] items-center justify-center border border-[#0078d7] bg-[#e5f1fb] outline-[5px] outline-offset-[4px] outline-[#ed1c24] outline-solid"><span>OK</span></div>
        <div className="flex w-[74px] items-center justify-center border border-[#adadad] bg-[#e1e1e1]"><span>Cancel</span></div>
      </div>
      <svg viewBox="0 0 9 9" className="absolute right-0 bottom-0 h-[9px] w-[9px]"><path d="M0 9l9-9M3 9l6-6M6 9l3-3" stroke="#999" strokeWidth="1.200" /></svg>
    </div>
  );
}

export default function App() {
  return (
    <div className="h-[764px] w-[4096px] overflow-hidden bg-white">
      <div className="flex h-[1144px] w-[6136px] origin-top-left scale-[0.66754] items-start font-['Open_Sans',sans-serif]">
        <div className="mt-[102px] ml-[36px] h-[821px] w-[1911px] shrink-0 overflow-hidden">
          <div className="-mt-[10px] -ml-[2px]">
            <Workbook active="Developer" mode="plain" cell="A281" formula="Online" count={31}>
              <div className="absolute top-[225px] left-[1045px] flex h-[36px] w-[210px] flex-col border border-[#b8b8b8] bg-white pl-[1px] text-[11.500px] leading-[17px] text-[#555]">
                <Fit w={206} className="font-semibold">Sales Territory.Sales Territory Group:</Fit>
                <Fit w={125}>Equals "North America"</Fit>
              </div>
            </Workbook>
          </div>
        </div>

        <svg viewBox="0 0 190 80" fill="none" className="mt-[479px] ml-[128px] h-[80px] w-[190px] shrink-0">
          <path d="M5 23.500h90.500V7L186 39.500 95.500 72V56.500H5z" stroke="#000" strokeWidth="5" strokeLinejoin="bevel" />
        </svg>

        <div className="mt-[256px] ml-[35px] flex w-[1623px] shrink-0 flex-col">
          <div className="flex h-[42px] items-start pl-[10px] text-[21px] leading-[36px] text-[#ed1c24]"><Fit w={545}>Now Click the Button "PivotTable" in the red-marked area !</Fit></div>
          <div className="relative">
            <div className="h-[387px] overflow-hidden">
              <Workbook active="Insert" mode="sel" cell="A1" formula="Channel.Channel Name" count={9}>
                <div className="absolute top-[128px] left-[1px] flex h-[160px] w-[215px] flex-col border border-[#bdbdbd] bg-white pl-[11px] text-[12px] leading-[15px] text-[#666]">
                  <Fit w={59} className="mt-[6px] font-bold">PivotTable</Fit>
                  <div className="mt-[11px]"><Fit w={156}>Easily arrange and summarize</Fit></div>
                  <div><Fit w={155}>complex data in a PivotTable.</Fit></div>
                  <div className="mt-[15px]"><Fit w={188}>FYI: You can double-click a value to</Fit></div>
                  <div><Fit w={182}>see which detailed values make up</Fit></div>
                  <div><Fit w={115}>the summarized total.</Fit></div>
                  <div className="mt-[6px] mr-[4px] -ml-[7px] h-px bg-[#dcdcdc]" />
                  <div className="mt-[7px] flex items-center gap-[8px] leading-[16px] font-bold text-[#2b6299]">
                    <svg viewBox="0 0 16 16" fill="none" className="h-[16px] w-[16px]"><circle cx="8" cy="8" r="7.400" stroke={B} /><path d="M5.800 6.500c0-3 4.500-3 4.500-.3 0 2-2.200 2-2.200 4M8.100 11.300v1.300" stroke={B} strokeWidth="1.200" /></svg>
                    <Fit w={74}>Tell me more</Fit>
                  </div>
                </div>
              </Workbook>
            </div>
            <div className="absolute top-[29px] -left-[2px] h-[83px] w-[67px] border-[5px] border-[#ed1c24] bg-[#1f1a14]/20" />
          </div>
        </div>

        <svg viewBox="0 0 130 90" fill="none" className="mt-[476px] ml-[17px] h-[90px] w-[130px] shrink-0">
          <path d="M7 25.500h58V8l57 36.500L65 81V63H7z" stroke="#ed1c24" strokeWidth="5" strokeLinejoin="round" />
        </svg>

        <div className="mt-[168px] ml-[22px] h-[671px] w-[1907px] shrink-0 overflow-hidden">
          <div className="-mt-[4px] -ml-[6px]">
            <Workbook active="Insert" mode="ants" cell="A1" formula="Channel.Channel Name" count={31}>
              <div className="absolute top-[578px] left-[618px] text-[21px] leading-[28px] font-light text-[#fff200]"><Fit w={539}>Now please click the Button "OK" of the red-marked area !</Fit></div>
              <Dialog />
            </Workbook>
          </div>
        </div>
      </div>
    </div>
  );
}
